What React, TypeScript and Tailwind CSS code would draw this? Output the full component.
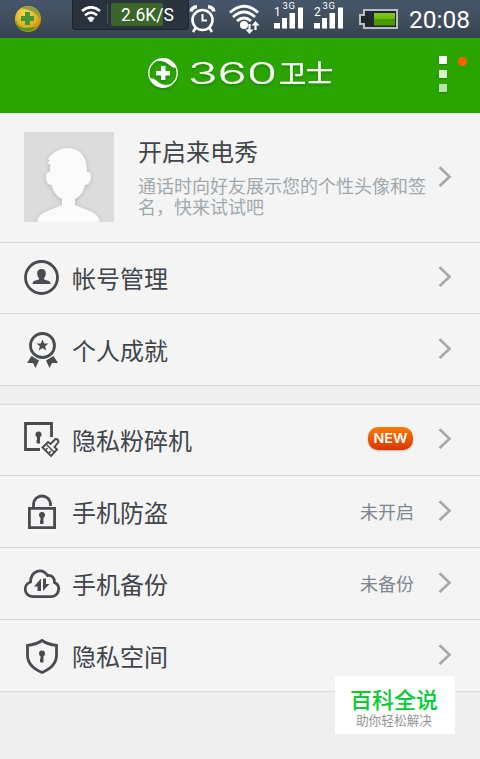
import type { ReactNode } from "react";

function StatusBar() {
  return (
    <div className="flex h-[38px] items-start bg-gradient-to-b from-[#46566a] via-[#414e5d] to-[#36424f] text-white">
      <svg className="mt-1.5 ml-[15px] size-[26px] shrink-0" viewBox="0 0 26 26">
        <defs>
          <radialGradient id="ball" cx="0.4" cy="0.3" r="0.75">
            <stop offset="0" stopColor="#f3dd50" />
            <stop offset="0.65" stopColor="#e0ae1c" />
            <stop offset="1" stopColor="#b4860f" />
          </radialGradient>
        </defs>
        <circle cx="13" cy="13" r="13" fill="url(#ball)" />
        <path d="M6 2q8-4 15 1q4 4 4.500 10Q20 4 6 2Z" fill="#85a044" />
        <path d="M1 14q2 8 9 8q5 0 11-1q-6 6-14 3Q1 21 1 14Z" fill="#4c9433" />
        <path d="M10 6h5v4h4v5h-4v4h-5v-4H6v-5h4Z" fill="#4d9338" />
      </svg>

      <div className="ml-[31px] flex h-[30px] w-[117px] items-start rounded-b-[4px] border border-t-0 border-[#1c242d] bg-[#29323d]">
        <svg className="mt-1.5 ml-2 h-[17px] w-5" viewBox="0 0 20 17" fill="none" stroke="#fff" strokeWidth="2.7">
          <path d="M1 5Q10-2.5 19 5M4 9.2q6-5 12 0M7 13q3-2.4 6 0" />
          <circle cx="10" cy="14" r="2" fill="#fff" stroke="none" />
        </svg>
        <div className="mt-1 ml-[6px] h-5 w-px bg-[#4b5560]" />
        <div className="mt-[3px] ml-[3px] h-[23px] w-[52px] rounded-[2px] bg-[#3c652c]">
          <span className="ml-[10px] block font-[Roboto,sans-serif] text-[17.5px] leading-[25px] whitespace-nowrap">
            2.6K/S
          </span>
        </div>
      </div>

      <svg className="mt-[5px] h-7 w-[27px] shrink-0" viewBox="0 0 27 28" fill="none" stroke="#fff">
        <circle cx="13.5" cy="15" r="10" strokeWidth="2.6" />
        <path d="M13.5 9v6.5H18" strokeWidth="2" />
        <path d="M2 6.500Q3 2 8 1.800M25 6.500Q24 2 19 1.800" strokeWidth="3.400" />
        <path d="m6.500 23-2.500 4M20.500 23l2.500 4" strokeWidth="2.500" />
      </svg>

      <svg className="mt-[4px] ml-[13px] h-[31px] w-[31px] shrink-0" viewBox="0 0 31 31" fill="none" stroke="#fff">
        <path d="M1 8.500Q15-4 29 8.500M4 13Q15 3 26 13M8 17q7-6 14 0" strokeWidth="2.800" />
        <circle cx="15" cy="21" r="4" fill="#fff" stroke="none" />
        <path d="M20.500 20v7M26.500 26v-7" strokeWidth="2.200" />
        <path d="m16.500 25.500 4 4.500 4-4.500ZM22.500 21.500l4-4.500 4 4.500Z" fill="#fff" stroke="none" />
      </svg>

      <Signal sim="1" className="ml-[14px]" />
      <Signal sim="2" className="ml-[10px]" />

      <svg className="mt-[9px] ml-[15px] h-5 w-[39px] shrink-0" viewBox="0 0 39 20">
        <defs>
          <linearGradient id="charge" x2="0" y2="1">
            <stop offset="0" stopColor="#84c51e" />
            <stop offset="0.48" stopColor="#6cb80c" />
            <stop offset="0.52" stopColor="#469a00" />
            <stop offset="1" stopColor="#4a9c00" />
          </linearGradient>
        </defs>
        <path d="M5 1h33v18H5v-4H1V6h4Z" fill="#20272e" stroke="#b8bec4" strokeWidth="2" />
        <rect x="15" y="4" width="21" height="12.500" fill="url(#charge)" />
      </svg>
      <span className="ml-[11px] font-[Roboto,sans-serif] text-[24.5px] leading-[40px] whitespace-nowrap">20:08</span>
    </div>
  );
}

function Signal({ sim, className }: { sim: string; className: string }) {
  return (
    <svg className={`h-[30px] w-[30px] shrink-0 ${className}`} viewBox="0 0 30 30" fill="#fff">
      <text x="0" y="16" fontFamily="Roboto, sans-serif" fontSize="12">{sim}</text>
      <text x="8.500" y="9" fontFamily="Roboto, sans-serif" fontSize="9.500" textLength="12.500">3G</text>
      <path d="M0 23h6v5.500H0ZM8 18h5v10.500H8ZM15.500 13h5.500v15.500h-5.500ZM24 7.500h5v21h-5Z" />
    </svg>
  );
}

function Header() {
  return (
    <header className="relative flex h-[75px] justify-center bg-[#2aa500]">
      <svg className="h-[75px] w-[184px] drop-shadow-[0_2px_1px_rgba(0,70,0,0.3)]" viewBox="0 0 184 75" fill="#fff">
        <circle cx="15" cy="35" r="14.200" fill="none" stroke="#fff" strokeWidth="1.400" />
        <path d="M5 24.500C11 18.500 21 18 28 29C26 31 23 28.500 20 26C16 23 11 22 5 24.500Z" />
        <path d="M25 45.500C19 51.500 9 52 2 41C4 39 7 41.500 10 44C14 47 19 48 25 45.500Z" />
        <path d="M13 28h4.500v5H22v4.500h-4.500v4.500H13v-4.500H8V33h5Z" />
        <text
          x="40"
          y="45.500"
          fontFamily="Inter, sans-serif"
          fontSize="29.500"
          fontWeight="300"
          stroke="#fff"
          strokeWidth="0.200"
          textLength="89"
          lengthAdjust="spacingAndGlyphs"
        >
          360
        </text>
        <text
          x="131"
          y="43.500"
          fontFamily="'Noto Sans CJK SC', sans-serif"
          fontSize="24"
          stroke="#fff"
          strokeWidth="0.500"
          textLength="54"
          lengthAdjust="spacingAndGlyphs"
        >
          卫士
        </text>
      </svg>
      <div className="absolute top-[18px] right-[33px] flex flex-col gap-1.5">
        <span className="size-2 bg-white shadow-[0_1px_2px_rgba(0,60,0,0.35)]" />
        <span className="size-2 bg-[#d9f0d3] shadow-[0_1px_2px_rgba(0,60,0,0.35)]" />
        <span className="size-2 bg-[#b9e2ad] shadow-[0_1px_2px_rgba(0,60,0,0.35)]" />
      </div>
      <span className="absolute top-[19px] right-[13px] size-[9px] rounded-full bg-[#ff6000]" />
    </header>
  );
}

function Chevron({ className }: { className: string }) {
  return (
    <svg className={`h-[22px] w-[14px] shrink-0 ${className}`} viewBox="0 0 14 22" fill="none">
      <path d="m1.500 2.300 10 9.500-10 9.500" stroke="#fff" strokeWidth="2.800" />
      <path d="m1.500 1.300 10 9.500-10 9.500" stroke="#a5abab" strokeWidth="2.800" />
    </svg>
  );
}

function Profile() {
  return (
    <div className="flex h-[130px] items-start border-b border-[#dadada] pt-[19px] pr-7 pl-6">
      <svg className="size-[90px] shrink-0 bg-[#dcdcdc]" viewBox="0 0 90 90">
        <path
          d="M13 89c1-4 4-7 8-9l17-7v-6c-6-3-9-8-10.500-14-4 0-5.500-4-5.500-8 0-3 1-5 4-5v-8l-2.500.2 2-3.700-1.500-1.500c4-6 11-11 19.500-11C56 16 63 25 63 38v2c3 0 4 2 4 5 0 4-2 8-6 8-1 6-4 11-10 14v6l17 7c4 2 7 5 8 9q-2 1-4 1H16q-2 0-3-1Z"
          fill="#fbfbfb"
          className="drop-shadow-[0_1px_2px_rgba(0,0,0,0.18)]"
        />
      </svg>
      <div className="ml-6 w-[290px] shrink-0">
        <h2 className="text-[24px] leading-[38px] text-[#41444a]">开启来电秀</h2>
        <p className="mt-[5px] text-[18px] leading-[21px] text-[#a0a8ad]">
          通话时向好友展示您的个性头像和签名，快来试试吧
        </p>
      </div>
      <Chevron className="mt-[34px] ml-2.5" />
    </div>
  );
}

function Row({
  icon,
  label,
  first,
  children,
}: {
  icon: ReactNode;
  label: string;
  first?: boolean;
  children?: ReactNode;
}) {
  return (
    <li
      className={`flex items-start border-b border-[#dadada] pr-7 pl-6 ${first ? "h-[71px] pt-[17px]" : "h-[72px] pt-[18px]"}`}
    >
      <svg
        className="size-9 shrink-0 overflow-visible"
        viewBox="0 0 36 36"
        fill="none"
        stroke="#484c51"
        strokeWidth="2.800"
      >
        {icon}
      </svg>
      <span className="ml-3 text-[24px] leading-9 text-[#41444a]">{label}</span>
      <span className="ml-auto text-[18px] leading-[34px] text-[#7f8591]">{children}</span>
      <Chevron className="mt-[6px] ml-6" />
    </li>
  );
}

function Keyhole({ x, y }: { x: number; y: number }) {
  return (
    <g transform={`translate(${x} ${y})`} fill="#484c51" stroke="none">
      <circle r="3" />
      <path d="M-1.500 1h3v8h-3z" />
      <path d="M-2 5.500h1v3h-1z" />
    </g>
  );
}

const accountIcon = (
  <>
    <circle cx="17.500" cy="17.500" r="16" />
    <path
      d="M17.500 9c3 0 4.300 1.500 4.300 4.500 0 2-.8 3.500-1.800 4.500v1.500c3 1 6.500 1 6.500 4.500h-18c0-3.500 3.500-3.500 6.500-4.500V18c-1-1-1.800-2.500-1.800-4.500 0-3 1.300-4.500 4.300-4.500Z"
      fill="#484c51"
      stroke="none"
    />
  </>
);

const medalIcon = (
  <>
    <circle cx="18.500" cy="13.500" r="12" />
    <path
      d="m18.500 7.500 1.700 4h4.300l-3.400 2.800 1.200 4.200-3.800-2.500-3.800 2.500 1.200-4.200-3.400-2.800h4.300ZM7.500 24l7.500 4.500-3.500 7.500-2.500-5H3ZM29.500 24l-7.500 4.500 3.500 7.500 2.500-5h6Z"
      fill="#484c51"
      stroke="none"
    />
  </>
);

const shredderIcon = (
  <>
    <path d="M16 27.500H1.500V1.500h26V15" />
    <Keyhole x={14.500} y={12.500} />
    <path d="m18.500 25.500 5.500-5.500 2.500 2 5-5q3 0 3 3l-4 5 2.500 2.500-6 6.500Z" strokeWidth="1.900" />
    <path d="m22 22 8.500 8.500M21.500 28l2-2M25 31l2-2" strokeWidth="1.500" />
  </>
);

const lockIcon = (
  <>
    <path d="M5.400 14.400h25.200v19.200H5.400ZM9.500 14v-3C9.500-1 26.500-1 26.500 11v1" />
    <Keyhole x={18} y={21} />
  </>
);

const cloudIcon = (
  <>
    <path d="M9.500 30.600C-1 30.500-1 18.500 6.500 16 7 4.500 18 1.500 23.500 9.500 28 9 31 12.500 30.500 16.500 38 20 34.500 30.600 27 30.600Z" />
    <path d="M17 12.500v12.500h-3.500V20.500h-3.500ZM19 25V12.500h3v5.500h3.500Z" fill="#484c51" stroke="none" />
  </>
);

const shieldIcon = (
  <>
    <path d="M18 2.500Q24 6.500 32.500 7.500V17c0 9-6 14-14.500 17.500C9.500 31 3.500 26 3.500 17V7.500Q12 6.500 18 2.500Z" />
    <Keyhole x={18} y={15.500} />
  </>
);

function NewBadge() {
  return (
    <span className="mt-[5px] mr-px block h-[23px] w-[45px] rounded-[10px] bg-gradient-to-b from-[#ff7900] to-[#d93300] shadow-[0_1px_2px_rgba(0,0,0,0.25)]">
      <svg className="h-[23px] w-[45px]" viewBox="0 0 45 23">
        <text
          x="5.500"
          y="16"
          fill="#fff"
          fontFamily="Inter, sans-serif"
          fontSize="13"
          fontWeight="600"
          textLength="34"
          lengthAdjust="spacingAndGlyphs"
        >
          NEW
        </text>
      </svg>
    </span>
  );
}

export default function App() {
  return (
    <div className="relative h-[759px] w-[480px] overflow-hidden bg-[#efefef] font-['Noto_Sans_CJK_SC',sans-serif]">
      <StatusBar />
      <Header />
      <main>
        <div className="bg-[#f4f4f4]">
          <Profile />
          <ul>
            <Row first icon={accountIcon} label="帐号管理" />
            <Row icon={medalIcon} label="个人成就" />
          </ul>
        </div>
        <ul className="mt-[18px] border-t border-[#dadada] bg-[#f4f4f4]">
          <Row first icon={shredderIcon} label="隐私粉碎机">
            <NewBadge />
          </Row>
          <Row icon={lockIcon} label="手机防盗">未开启</Row>
          <Row icon={cloudIcon} label="手机备份">未备份</Row>
          <Row icon={shieldIcon} label="隐私空间" />
        </ul>
      </main>
      <div className="absolute right-[25px] bottom-[25px] h-[58px] w-[120px] bg-white text-center font-['Liberation_Sans','Noto_Sans_CJK_SC',sans-serif]">
        <p className="mt-[10px] -ml-0.5 text-[22px] leading-[30px] font-medium text-[#06cc34]">百科全说</p>
        <p className="-mt-px -ml-0.5 text-[12.7px] leading-[13px] text-[#959595]">助你轻松解决</p>
      </div>
    </div>
  );
}
